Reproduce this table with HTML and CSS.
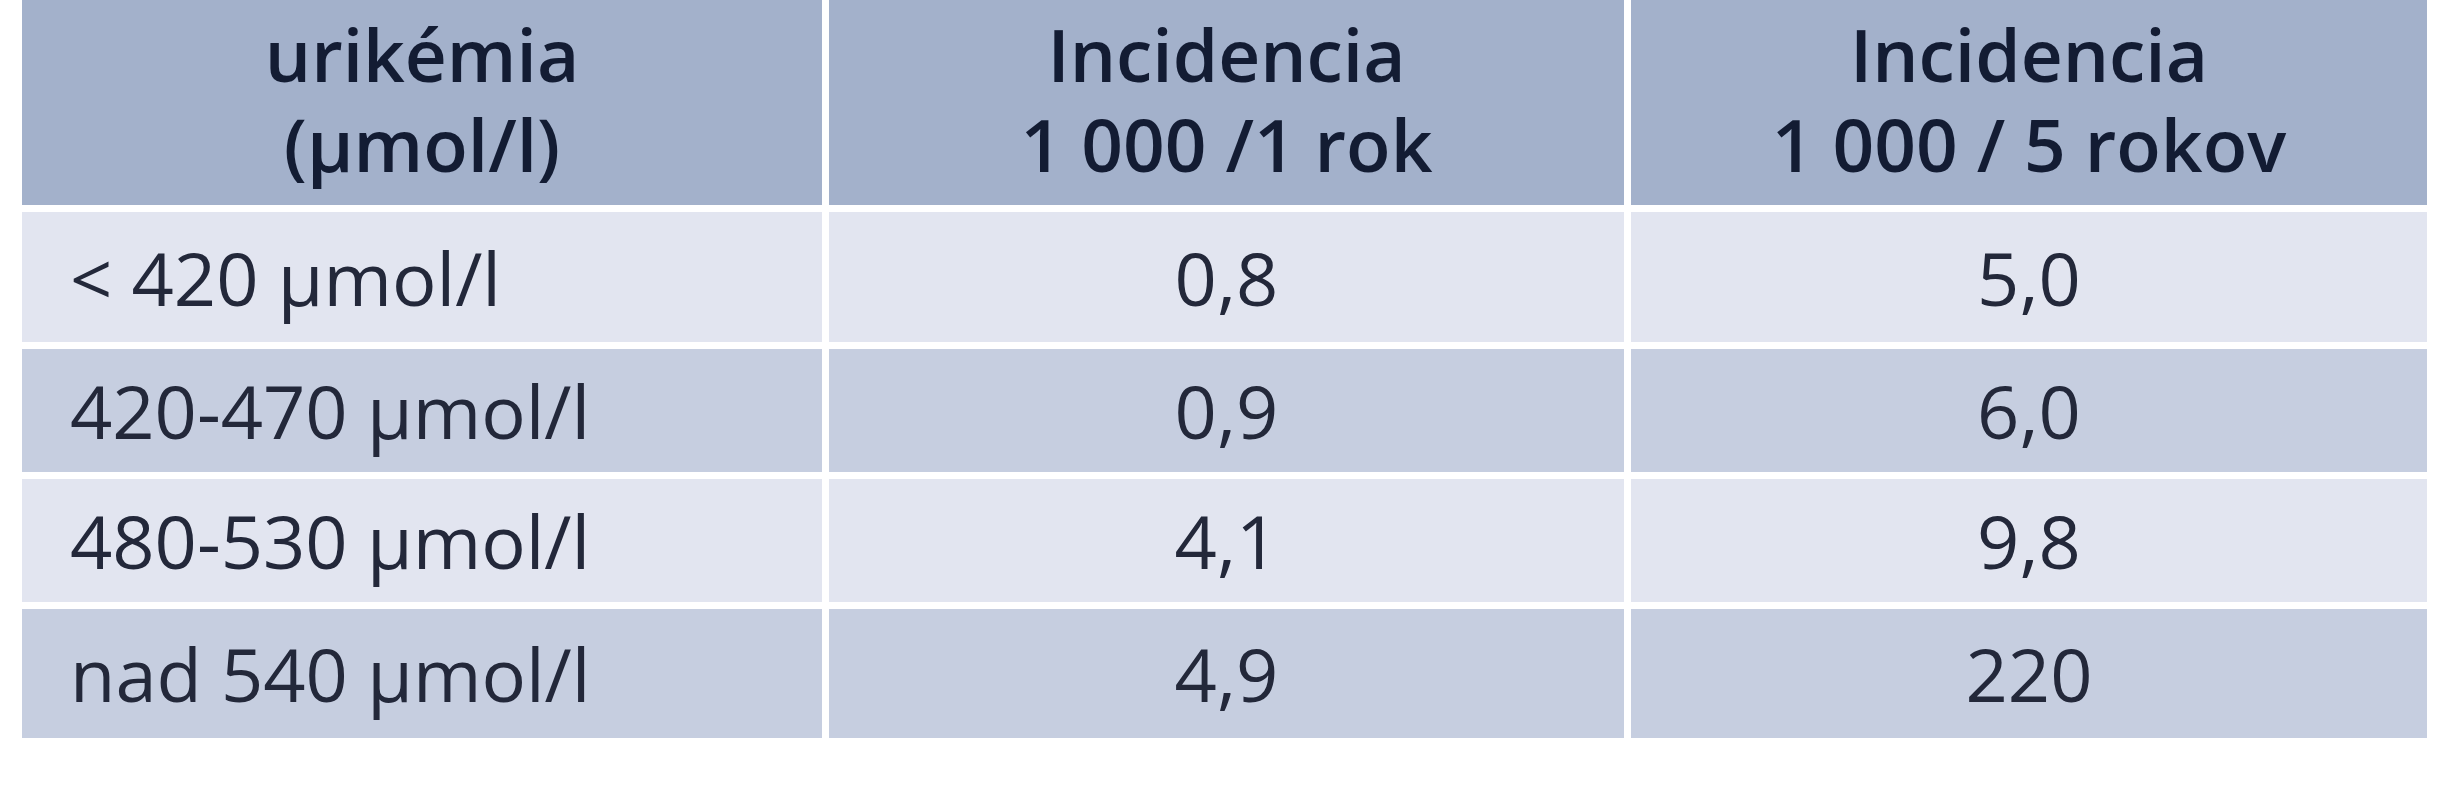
FILE: index.html
```html
<!DOCTYPE html>
<html lang="sk">
<head>
<meta charset="utf-8">
<title>Urikémia – incidencia</title>
<link rel="stylesheet" href="styles.css">
</head>
<body>
<div class="table">
  <div class="cell head">urikémia<br>(μmol/l)</div>
  <div class="cell head">Incidencia<br>1 000 /1 rok</div>
  <div class="cell head">Incidencia<br>1 000 / 5 rokov</div>

  <div class="cell light label">&lt; 420 μmol/l</div>
  <div class="cell light num">0,8</div>
  <div class="cell light num">5,0</div>

  <div class="cell dark label">420-470 μmol/l</div>
  <div class="cell dark num">0,9</div>
  <div class="cell dark num">6,0</div>

  <div class="cell light label">480-530 μmol/l</div>
  <div class="cell light num">4,1</div>
  <div class="cell light num">9,8</div>

  <div class="cell dark label">nad 540 μmol/l</div>
  <div class="cell dark num">4,9</div>
  <div class="cell dark num">220</div>
</div>
</body>
</html>
```
FILE: styles.css
```css
html, body {
  margin: 0;
  padding: 0;
  background: #ffffff;
}

body {
  padding-left: 22px;
  font-family: "Open Sans", "DejaVu Sans", sans-serif;
}

.table {
  display: grid;
  grid-template-columns: 800px 795px 796px;
  grid-template-rows: 205px 130px 123px 123px 129px;
  column-gap: 7px;
  row-gap: 7px;
  width: 2405px;
}

.cell {
  font-size: 74px;
  display: flex;
  align-items: center;
}

.head {
  background: #a3b1cb;
  color: #131c33;
  font-weight: 600;
  font-size: 73px;
  line-height: 90px;
  text-align: center;
  justify-content: center;
  align-items: flex-start;
  padding-top: 9px;
  box-sizing: border-box;
}

.light {
  background: #e2e5f0;
}

.dark {
  background: #c6cee0;
}

.label {
  color: #23283a;
  padding-left: 48px;
}

.num {
  color: #23283a;
  justify-content: center;
}
```
